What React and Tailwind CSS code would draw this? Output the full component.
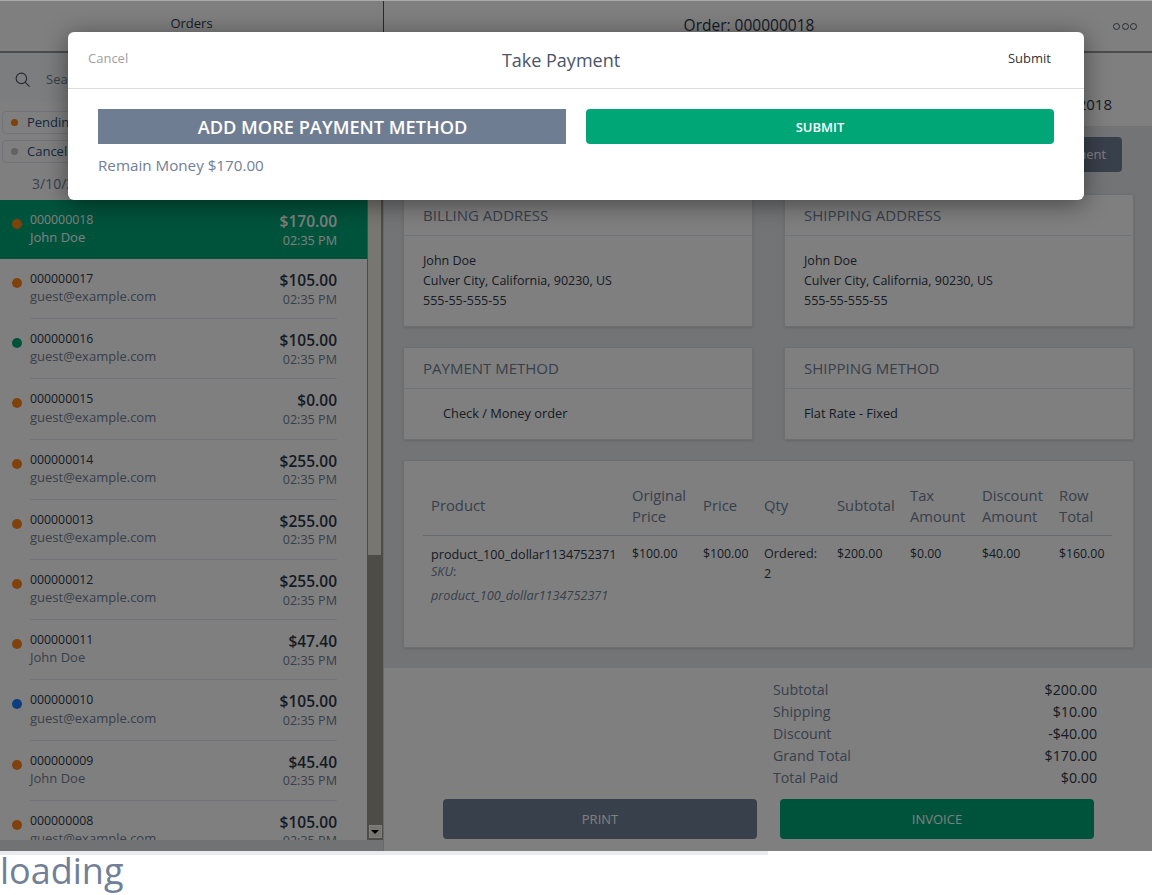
const orders = [
  { id: '000000018', who: 'John Doe', total: '$170.00', dot: 'bg-[#ff8419]', active: true },
  { id: '000000017', who: 'guest@example.com', total: '$105.00', dot: 'bg-[#ff8419]' },
  { id: '000000016', who: 'guest@example.com', total: '$105.00', dot: 'bg-[#00a676]' },
  { id: '000000015', who: 'guest@example.com', total: '$0.00', dot: 'bg-[#ff8419]' },
  { id: '000000014', who: 'guest@example.com', total: '$255.00', dot: 'bg-[#ff8419]' },
  { id: '000000013', who: 'guest@example.com', total: '$255.00', dot: 'bg-[#ff8419]' },
  { id: '000000012', who: 'guest@example.com', total: '$255.00', dot: 'bg-[#ff8419]' },
  { id: '000000011', who: 'John Doe', total: '$47.40', dot: 'bg-[#ff8419]' },
  { id: '000000010', who: 'guest@example.com', total: '$105.00', dot: 'bg-[#1a7cff]' },
  { id: '000000009', who: 'John Doe', total: '$45.40', dot: 'bg-[#ff8419]' },
  { id: '000000008', who: 'guest@example.com', total: '$105.00', dot: 'bg-[#ff8419]' },
];

const totals = [
  ['Subtotal', '$200.00'],
  ['Shipping', '$10.00'],
  ['Discount', '-$40.00'],
  ['Grand Total', '$170.00'],
  ['Total Paid', '$0.00'],
];

const columns = [
  ['Product', 'w-[201px]'],
  ['Original Price', 'w-[71px]'],
  ['Price', 'w-[61px]'],
  ['Qty', 'w-[73px]'],
  ['Subtotal', 'w-[73px]'],
  ['Tax Amount', 'w-[72px]'],
  ['Discount Amount', 'w-[77px]'],
  ['Row Total', 'w-[61px]'],
];

const OrderRow = ({ order }) => (
  <div className={`relative shrink-0 pl-[30px] pr-[30px] ${order.active ? 'h-[59px] bg-[#00a676] text-white' : 'h-[60.2px]'}`}>
    <span className={`absolute left-[12px] top-[19px] h-[10px] w-[10px] rounded-full ${order.dot}`} />
    <div className={`flex h-full justify-between ${order.active ? '' : 'border-b border-[#e2e8f0]'}`}>
      <div className="pt-[11px]">
        <div className={`text-[12.3px] leading-[17.3px] ${order.active ? '' : 'text-[#2d3748]'}`}>{order.id}</div>
        <div className={`text-[13px] leading-[18.3px] ${order.active ? '' : 'text-[#718096]'}`}>{order.who}</div>
      </div>
      <div className="pt-[11px] text-right">
        <div className={`text-[15.5px] font-semibold leading-[20px] ${order.active ? '' : 'text-[#2d3748]'}`}>{order.total}</div>
        <div className={`mt-[0.6px] text-[12.6px] leading-[18px] ${order.active ? '' : 'text-[#718096]'}`}>02:35 PM</div>
      </div>
    </div>
  </div>
);

const Card = ({ title, children, bodyClass }) => (
  <div className="w-[350px] border border-[#dcdfe3] bg-white shadow-sm">
    <div className="flex h-[41px] items-center border-b border-[#e2e8f0] px-[19px] text-[15px] uppercase text-[#718096]">{title}</div>
    <div className={`leading-[20px] text-[#2d3748] ${bodyClass}`}>{children}</div>
  </div>
);

const Address = () => (
  <>
    <div>John Doe</div>
    <div>Culver City, California, 90230, US</div>
    <div>555-55-555-55</div>
  </>
);

const Scrollbar = () => (
  <div className="flex w-[16px] shrink-0 flex-col bg-[#9c988c]">
    <div className="ml-[1px] h-[355px] w-[13px] bg-[#f0ece0]" />
    <div className="flex-1" />
    <div className="mx-auto mb-[2px] flex h-[13px] w-[13px] items-center justify-center border border-[#fff] bg-[#f0ece0]">
      <span className="mt-[1px] h-0 w-0 border-x-[4px] border-t-[4px] border-x-transparent border-t-black" />
    </div>
  </div>
);

const PaymentModal = () => (
  <div className="absolute left-[68px] top-[32px] z-30 h-[168px] w-[1016px] rounded-md bg-white shadow-[0_4px_24px_rgba(0,0,0,0.45)]">
    <div className="relative flex h-[57px] items-center justify-between border-b border-[#dddddd] pl-[20px] pr-[33px]">
      <span className="-mt-[3px] text-[13px] text-[#a0a0a0]">Cancel</span>
      <span className="absolute left-0 right-[30px] text-center text-[18px] text-[#4a5568]">Take Payment</span>
      <span className="-mt-[3px] text-[13px] font-medium text-[#333333]">Submit</span>
    </div>
    <div className="px-[30px] pt-[20px]">
      <div className="flex gap-[20px]">
        <button className="h-[35px] w-[468px] bg-[#6e7d91] pl-[1px] pt-[2px] text-[18.2px] font-semibold uppercase text-white">Add more payment method</button>
        <button className="h-[35px] w-[468px] rounded-sm bg-[#00a676] pt-[2px] text-[13px] font-semibold uppercase text-white">Submit</button>
      </div>
      <div className="mt-[10px] text-[15.2px] leading-[22px] text-[#718096]">Remain Money $170.00</div>
    </div>
  </div>
);

export default function App() {
  return (
    <div className="h-[895px] w-full overflow-hidden bg-white font-['Open_Sans',sans-serif]">
      <div className="relative h-[851px] overflow-hidden">
        <div className="flex h-[53px] border-b-2 border-t border-b-[#999999] border-t-[#aaaaaa] bg-white shadow">
          <div className="flex w-[384px] shrink-0 items-center justify-center border-r border-[#4a5568] pb-[4px] text-[13px] text-[#2d3748]">Orders</div>
          <div className="relative flex flex-1 items-center justify-center pr-[38px] text-[15.5px] text-[#2d3748]">
            Order: 000000018
            <div className="absolute right-[15px] top-[22px] flex gap-[1.5px]">
              <span className="h-[7px] w-[7px] rounded-full border border-[#4a5568]" />
              <span className="h-[7px] w-[7px] rounded-full border border-[#4a5568]" />
              <span className="h-[7px] w-[7px] rounded-full border border-[#4a5568]" />
            </div>
          </div>
        </div>

        <div className="flex h-[798px]">
          <div className="flex w-[384px] shrink-0 flex-col border-r border-[#cbd5e0]">
            <div className="flex h-[49px] shrink-0 items-center gap-[16px] bg-[#f7fafc] pl-[15px] pt-[4px]">
              <svg width="15" height="15" viewBox="0 0 16 16" fill="none" stroke="#4a5568" strokeWidth="1.2">
                <circle cx="6.8" cy="6.8" r="5.6" />
                <path d="M11 11l4.5 4.5" />
              </svg>
              <span className="text-[13px] text-[#718096]">Search</span>
            </div>
            <div className="flex h-[68px] shrink-0 flex-col gap-[6px] pl-[2px] pt-[9px]">
              <div className="flex h-[23px] w-[120px] items-center gap-[9px] rounded-sm border border-[#e2e8f0] pl-[8px] text-[13px] text-[#2c5282]">
                <span className="h-[7px] w-[7px] rounded-full bg-[#ff8419]" />Pending
              </div>
              <div className="flex h-[23px] w-[120px] items-center gap-[9px] rounded-sm border border-[#e2e8f0] pl-[8px] text-[13px] text-[#2c5282]">
                <span className="h-[7px] w-[7px] rounded-full bg-[#c4c4c4]" />Cancelled
              </div>
            </div>
            <div className="h-[30px] shrink-0 pl-[32px] pt-[4px] text-[14px] leading-[20px] text-[#718096]">3/10/2018</div>
            <div className="flex min-h-0 flex-1">
              <div className="flex min-w-0 flex-1 flex-col overflow-hidden">
                {orders.map((order) => (
                  <OrderRow key={order.id} order={order} />
                ))}
              </div>
              <Scrollbar />
            </div>
            <div className="h-[11px] shrink-0 bg-[#e2e4e6]" />
          </div>

          <div className="flex min-w-0 flex-1 flex-col">
            <div className="flex h-[73px] shrink-0 items-center justify-end bg-white pr-[40px] pt-[29px] text-[15px] text-[#2d3748]">3/10/2018</div>
            <div className="flex h-[542px] shrink-0 flex-col bg-[#e6e9ec] pl-[19px] pt-[11px]">
              <div className="flex h-[35px] justify-end pr-[30px]">
                <div className="flex w-[140px] items-center justify-center rounded bg-[#718096] pl-[50px] text-[13px] text-white">Shipment</div>
              </div>
              <div className="mt-[22px] flex gap-[31px]">
                <Card title="Billing Address" bodyClass="h-[90px] px-[19px] pt-[15px] text-[12.5px]"><Address /></Card>
                <Card title="Shipping Address" bodyClass="h-[90px] px-[19px] pt-[15px] text-[12.5px]"><Address /></Card>
              </div>
              <div className="mt-[20px] flex gap-[31px]">
                <Card title="Payment Method" bodyClass="h-[50px] pl-[39px] pt-[14px] text-[12.8px]">Check / Money order</Card>
                <Card title="Shipping Method" bodyClass="h-[50px] px-[19px] pt-[14px] text-[12.8px]">Flat Rate - Fixed</Card>
              </div>
              <div className="mt-[20px] h-[188px] w-[731px] border border-[#dcdfe3] bg-white px-[19px] pt-[20px] shadow-sm">
                <table className="w-[689px] table-fixed border-collapse text-left">
                  <thead>
                    <tr className="h-[54px] border-b border-[#cbd5e0]">
                      {columns.map(([label, width]) => (
                        <th key={label} className={`${width} px-[8px] pb-[4px] align-middle text-[14.8px] font-normal leading-[21px] text-[#718096]`}>{label}</th>
                      ))}
                    </tr>
                  </thead>
                  <tbody className="text-[12.3px] leading-[20px] text-[#2d3748]">
                    <tr className="align-top">
                      <td className="whitespace-nowrap pl-[8px] pt-[8px] text-[12.65px]">
                        product_100_dollar1134752371
                        <div className="-mt-[3px] text-[#718096]"><i>SKU</i>:</div>
                        <div className="mt-[4px] italic text-[#718096]">product_100_dollar1134752371</div>
                      </td>
                      <td className="pl-[8px] pt-[8px]">$100.00</td>
                      <td className="pl-[8px] pt-[8px]">$100.00</td>
                      <td className="pl-[8px] pt-[8px] text-[12.6px]">Ordered:<br />2</td>
                      <td className="pl-[8px] pt-[8px]">$200.00</td>
                      <td className="pl-[8px] pt-[8px]">$0.00</td>
                      <td className="pl-[8px] pt-[8px]">$40.00</td>
                      <td className="pl-[8px] pt-[8px]">$160.00</td>
                    </tr>
                  </tbody>
                </table>
              </div>
            </div>
            <div className="flex flex-1 flex-col bg-white pt-[11px]">
              <div className="ml-[389px] w-[324px] text-[14.2px] leading-[22px] text-[#718096]">
                {totals.map(([label, amount]) => (
                  <div key={label} className="flex justify-between">
                    <span>{label}</span>
                    <span className="text-[#2d3748]">{amount}</span>
                  </div>
                ))}
              </div>
              <div className="ml-[59px] mt-[10px] flex gap-[23px]">
                <button className="h-[40px] w-[314px] rounded-sm bg-[#718096] pt-[1px] text-[13px] font-medium uppercase text-white">Print</button>
                <button className="h-[40px] w-[314px] rounded-sm bg-[#00a676] pt-[1px] text-[13px] font-medium uppercase text-white">Invoice</button>
              </div>
            </div>
          </div>
        </div>

        <div className="absolute inset-x-0 bottom-0 top-px z-10 bg-black/50" />
        <PaymentModal />
      </div>
      <div className="h-[4px] w-[768px] bg-[#e9ebf0]" />
      <div className="relative -mt-[4px] h-[44px] text-[36px] leading-[40px] text-[#718096]">loading</div>
    </div>
  );
}
